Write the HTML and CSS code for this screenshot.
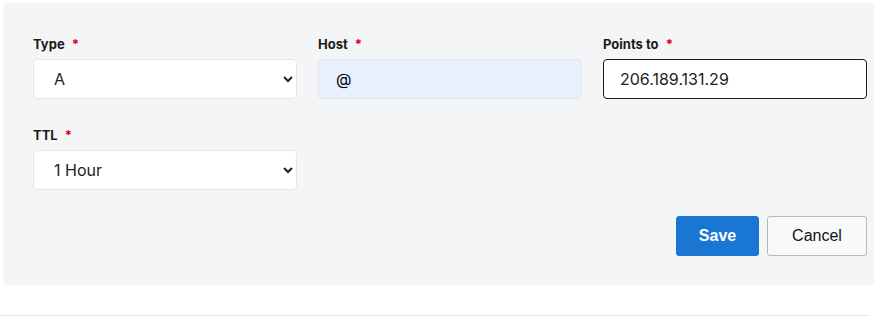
FILE: index.html
```html
<!DOCTYPE html>
<html>
<head>
<meta charset="utf-8">
<link rel="stylesheet" href="styles.css">
</head>
<body>
<div class="panel">
  <div class="grid">
    <div class="field">
      <label class="label">Type <span class="req">*</span></label>
      <select class="control select"><option>A</option></select>
    </div>
    <div class="field">
      <label class="label">Host <span class="req">*</span></label>
      <input class="control host" value="@">
    </div>
    <div class="field">
      <label class="label">Points to <span class="req">*</span></label>
      <input class="control focused" value="206.189.131.29">
    </div>
    <div class="field">
      <label class="label">TTL <span class="req">*</span></label>
      <select class="control select"><option>1 Hour</option></select>
    </div>
  </div>
  <div class="actions">
    <button class="btn primary">Save</button>
    <button class="btn secondary">Cancel</button>
  </div>
</div>
<div class="divider"></div>
</body>
</html>
```
FILE: styles.css
```css
html, body {
  margin: 0;
  padding: 0;
  background: #ffffff;
}
body {
  font-family: "Inter", "Open Sans", "Liberation Sans", sans-serif;
  color: #111;
}
.panel {
  margin: 3px 0 0 3px;
  padding: 35px 7px 29px 30px;
  background: #f4f5f7;
  border-radius: 4px 0 0 4px;
}
.grid {
  display: grid;
  grid-template-columns: repeat(3, 1fr);
  column-gap: 21px;
  row-gap: 30px;
}
.field {
  display: flex;
  flex-direction: column;
  gap: 8px;
}
.label {
  font-size: 13px;
  font-weight: 700;
  line-height: 13px;
  color: #1b1b1b;
}
.req {
  color: #d6001c;
  margin-left: 4px;
}
.control {
  box-sizing: border-box;
  height: 40px;
  width: 100%;
  border: 1px solid #e4e6e9;
  border-radius: 4px;
  background: #fff;
  font-family: "Inter", "Open Sans", "Liberation Sans", sans-serif;
  font-size: 16px;
  color: #222;
  outline: none;
  margin: 0;
}
.select {
  padding: 0 6px 0 16px;
}
.host {
  background: #e8f0fe;
  padding: 0 17px;
  color: #000;
}
.focused {
  border: 1px solid #1a1a1a;
  padding: 0 16px;
}
.actions {
  display: flex;
  justify-content: flex-end;
  gap: 8px;
  margin-top: 26px;
}
.btn {
  box-sizing: border-box;
  height: 40px;
  border-radius: 3px;
  font-family: "Liberation Sans", Arial, sans-serif;
  font-size: 16px;
  margin: 0;
  cursor: pointer;
}
.primary {
  width: 83px;
  background: #1976d2;
  border: 1px solid #1976d2;
  color: #fff;
  font-weight: 700;
}
.secondary {
  width: 100px;
  background: #f8f9fa;
  border: 1px solid #b5b8bc;
  color: #111;
}
.divider {
  margin-top: 30px;
  height: 1px;
  background: #e6e6e6;
  margin-right: 4px;
}
```
